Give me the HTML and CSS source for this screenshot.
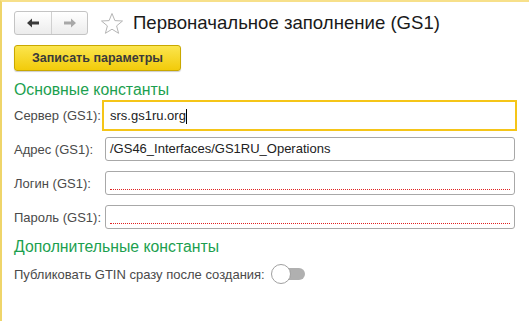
FILE: index.html
```html
<!DOCTYPE html>
<html lang="ru">
<head>
  <meta charset="UTF-8" />
  <title>Первоначальное заполнение (GS1)</title>
  <link rel="stylesheet" href="styles.css">
</head>
<body>
  <div class="form-window">
    <div class="header">
      <div class="nav-buttons">
        <button class="nav-btn" type="button">
          <svg width="14" height="10" viewBox="0 0 14 10"><path d="M1 5 L6 0.5 L6 3.5 L13 3.5 L13 6.5 L6 6.5 L6 9.5 Z" fill="#3a3a3a"/></svg>
        </button>
        <button class="nav-btn" type="button">
          <svg width="14" height="10" viewBox="0 0 14 10"><path d="M13 5 L8 0.5 L8 3.5 L1 3.5 L1 6.5 L8 6.5 L8 9.5 Z" fill="#a8a8a8"/></svg>
        </button>
      </div>
      <svg class="star" width="24" height="23" viewBox="0 0 24 23">
        <path d="M12 1.5 L14.9 8.6 L22.5 9 L16.6 13.9 L18.6 21.3 L12 17.2 L5.4 21.3 L7.4 13.9 L1.5 9 L9.1 8.6 Z" fill="none" stroke="#b5b5b5" stroke-width="1"/>
      </svg>
      <h1>Первоначальное заполнение (GS1)</h1>
    </div>

    <button class="save-button" type="button">Записать параметры</button>

    <h2>Основные константы</h2>
    <div class="field-row">
      <label>Сервер (GS1):</label>
      <div class="input active">srs.gs1ru.org<span class="caret"></span></div>
    </div>
    <div class="field-row near">
      <label>Адрес (GS1):</label>
      <div class="input">/GS46_Interfaces/GS1RU_Operations</div>
    </div>
    <div class="field-row">
      <label>Логин (GS1):</label>
      <div class="input required"></div>
    </div>
    <div class="field-row">
      <label>Пароль (GS1):</label>
      <div class="input required"></div>
    </div>

    <h2 class="second">Дополнительные константы</h2>
    <div class="toggle-row">
      <label>Публиковать GTIN сразу после создания:</label>
      <span class="toggle"><span class="knob"></span></span>
    </div>
  </div>
</body>
</html>
```

FILE: styles.css
```css
body {
  margin: 0;
  font-family: "Liberation Sans", Arial, sans-serif;
  background-color: white;
}

.form-window {
  width: 529px;
  height: 321px;
  box-sizing: border-box;
  border-top: 2px solid #f7e08a;
  border-left: 2px solid #efd56a;
  padding: 9px 12px 0 12px;
}

.header {
  display: flex;
  align-items: center;
  height: 24px;
}

.nav-buttons {
  display: flex;
  border: 1px solid #c4c4c4;
  border-radius: 3px;
  background: linear-gradient(#ffffff, #ececec);
}

.nav-btn {
  width: 36px;
  height: 22px;
  border: none;
  background: none;
  padding: 0;
  display: flex;
  align-items: center;
  justify-content: center;
}

.nav-btn + .nav-btn {
  border-left: 1px solid #d0d0d0;
}

.star {
  margin-left: 12px;
}

h1 {
  margin: 0 0 0 9px;
  font-size: 18.6px;
  font-weight: normal;
  color: #1a1a1a;
}

.save-button {
  margin-top: 10px;
  width: 167px;
  height: 26px;
  border: 1px solid #c9a800;
  border-radius: 3px;
  background: linear-gradient(#fbe54e, #f2cb0a);
  box-shadow: 0 1px 1px rgba(0,0,0,0.2);
  font-family: inherit;
  font-size: 12.5px;
  font-weight: bold;
  color: #3a3a3a;
  padding: 0;
}

h2 {
  margin: 10px 0 0 0;
  font-size: 15.8px;
  font-weight: normal;
  color: #1c9f4f;
  line-height: 18px;
}

h2.second {
  margin-top: 9px;
}

.field-row {
  display: flex;
  align-items: center;
  margin-top: 1px;
}

.field-row + .field-row {
  margin-top: 10px;
}

.field-row + .field-row.near {
  margin-top: 6px;
}

.field-row label,
.toggle-row label {
  font-size: 13px;
  color: #4a4a4a;
}

.field-row label {
  width: 91px;
  flex: none;
}

.input {
  flex: 1;
  height: 22px;
  line-height: 22px;
  border: 1px solid #a8a8a8;
  border-radius: 3px;
  padding: 0 4px;
  font-size: 13px;
  color: #222;
  position: relative;
  margin-right: 2px;
}

.input.active {
  height: 27px;
  line-height: 27px;
  border: 2px solid #f5c518;
  border-radius: 0;
  margin-left: -3px;
  margin-right: 0;
  padding-left: 6px;
  font-size: 13px;
}

.caret {
  display: inline-block;
  width: 1px;
  height: 15px;
  background: #000;
  vertical-align: middle;
}

.input.required::after {
  content: "";
  position: absolute;
  left: 4px;
  right: 4px;
  bottom: 4px;
  border-bottom: 1px dotted #e02020;
}

.toggle-row {
  display: flex;
  align-items: center;
  margin-top: 8px;
}

.toggle {
  margin-left: 6px;
  width: 34px;
  height: 20px;
  position: relative;
  display: inline-block;
}

.toggle::before {
  content: "";
  position: absolute;
  left: 6px;
  right: 0;
  top: 4px;
  height: 12px;
  border-radius: 6px;
  background: #b0b0b0;
}

.knob {
  position: absolute;
  left: 0;
  top: 0;
  width: 18px;
  height: 18px;
  border-radius: 50%;
  background: white;
  border: 1px solid #a0a0a0;
}
```
